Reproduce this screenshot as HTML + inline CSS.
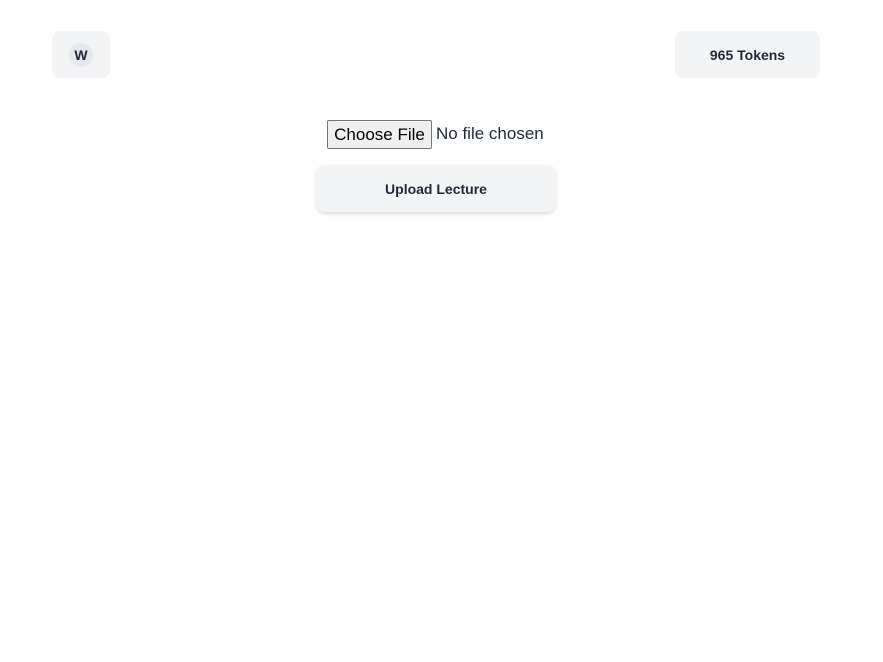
<!DOCTYPE html>
<html><head><style>
body{margin:0;width:883px;height:662px;background:#fff;font-family:"Liberation Sans",sans-serif;position:relative;overflow:hidden}
.b{position:absolute;background:#f3f4f6;border-radius:8px;display:flex;align-items:center;justify-content:center;color:#1f2937;font-weight:bold;font-size:14px}
</style></head><body>
<div class="b" style="left:52px;top:31px;width:58px;height:47px"><div style="width:24px;height:24px;border-radius:50%;background:#e5e7eb;display:flex;align-items:center;justify-content:center">W</div></div>
<div class="b" style="left:675px;top:31px;width:145px;height:47px">965 Tokens</div>
<div style="position:absolute;left:327px;top:120px;width:103px;height:27px;border:1px solid #767676;background:#efefef;border-radius:2px;font-size:17px;line-height:27px;text-align:center;color:#000">Choose File</div>
<div style="position:absolute;left:436px;top:120px;font-size:17px;line-height:28px;color:#1f2937">No file chosen</div>
<div class="b" style="left:317px;top:165px;width:238px;height:47px;box-shadow:0 2px 4px rgba(0,0,0,.15)">Upload Lecture</div>
</body></html>
